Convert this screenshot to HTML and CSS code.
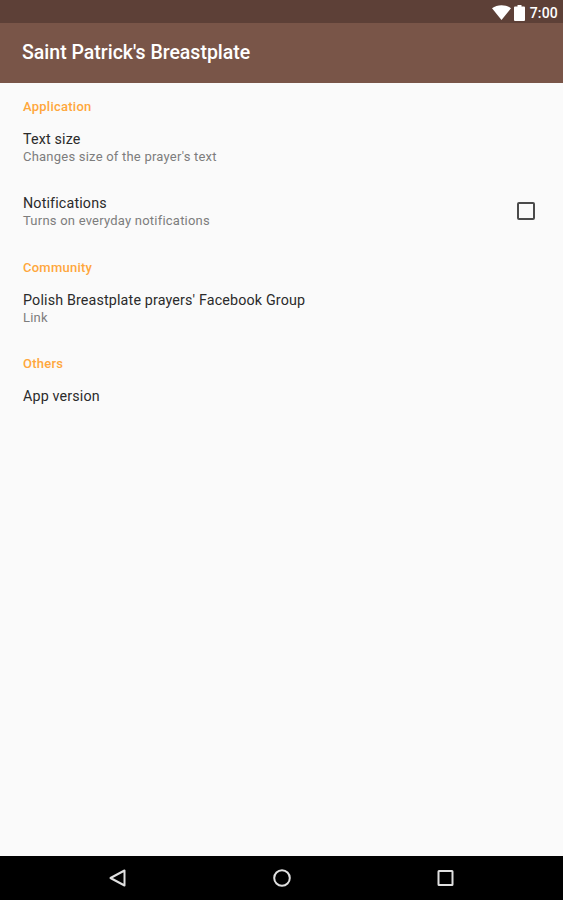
FILE: index.html
```html
<!DOCTYPE html>
<html lang="en">
  <head>
    <meta charset="UTF-8" />
    <meta name="viewport" content="width=device-width, initial-scale=1.0" />
    <title>Saint Patrick's Breastplate</title>
    <link rel="stylesheet" href="styles.css">
  </head>
  <body>
    <div class="statusbar">
      <svg width="19" height="15" viewBox="0 0 19 15">
        <path d="M0 3.2C5.3-.8 13.7-.8 19 3.2L9.5 15z" />
      </svg>
      <svg width="11" height="16" viewBox="0 0 11 16">
        <path d="M3.500 0h4v1.500h2.500q1 0 1 1V15q0 1-1 1H1q-1 0-1-1V2.500q0-1 1-1h2.500z" />
      </svg>
      <span class="clock">7:00</span>
    </div>

    <header class="toolbar">
      <h1>Saint Patrick's Breastplate</h1>
    </header>

    <main class="settings">
      <h2>Application</h2>
      <div class="item">
        <div>
          <div class="title">Text size</div>
          <div class="summary">Changes size of the prayer's text</div>
        </div>
      </div>
      <div class="item">
        <div>
          <div class="title">Notifications</div>
          <div class="summary">Turns on everyday notifications</div>
        </div>
        <span class="checkbox"></span>
      </div>

      <h2>Community</h2>
      <div class="item">
        <div>
          <div class="title">Polish Breastplate prayers' Facebook Group</div>
          <div class="summary">Link</div>
        </div>
      </div>

      <h2>Others</h2>
      <div class="item">
        <div class="title">App version</div>
      </div>
    </main>

    <nav class="navbar">
      <svg width="20" height="20" viewBox="0 0 20 20">
        <path d="M16.500 2.500v15L2.500 10z" />
      </svg>
      <svg width="20" height="20" viewBox="0 0 20 20">
        <circle cx="10" cy="10" r="7.8" />
      </svg>
      <svg width="20" height="20" viewBox="0 0 20 20">
        <rect x="2.5" y="3" width="14" height="14" rx="0.5" />
      </svg>
    </nav>
  </body>
</html>
```

FILE: styles.css
```css
body {
  margin: 0;
  height: 100vh;
  display: flex;
  flex-direction: column;
  background-color: #fafafa;
  font-family: Roboto, sans-serif;
}

/* status bar */
.statusbar {
  display: flex;
  justify-content: flex-end;
  align-items: center;
  gap: 3px;
  height: 23px;
  padding: 2px 5px 0 0;
  box-sizing: border-box;
  background-color: #5d4037;
  color: white;
}
.statusbar svg {
  fill: white;
}
.clock {
  margin-left: 2px;
  font-size: 14px;
  font-weight: 500;
  line-height: 16px;
  letter-spacing: 0.2px;
}

.toolbar {
  display: flex;
  align-items: center;
  height: 60px;
  padding: 0 0 1px 22px;
  box-sizing: border-box;
  background-color: #795548;
}
h1 {
  margin: 0;
  color: white;
  font-size: 19.5px;
  font-weight: 500;
}

/* preference list */
.settings {
  flex: 1;
  padding: 0 28px 0 23px;
}
h2 {
  height: 32.3px;
  margin: 0;
  padding-top: 15px;
  box-sizing: border-box;
  color: #ffa73c;
  font-size: 13px;
  font-weight: 500;
  line-height: 17px;
  letter-spacing: 0.25px;
}
.item {
  display: flex;
  justify-content: space-between;
  height: 64.3px;
  padding-top: 15.7px;
  box-sizing: border-box;
}
.title {
  color: #2b2b2b;
  font-size: 14.3px;
  line-height: 17px;
  letter-spacing: 0.15px;
}
.summary {
  color: #7d7d7d;
  font-size: 13px;
  line-height: 18px;
  letter-spacing: 0.22px;
}
.checkbox {
  width: 18px;
  height: 18px;
  margin-top: 6.5px;
  box-sizing: border-box;
  border: 2px solid #4a4a4a;
  border-radius: 2px;
}

/* navigation keys */
.navbar {
  display: flex;
  justify-content: center;
  align-items: center;
  gap: 144px;
  height: 44px;
  background-color: black;
}
.navbar svg {
  fill: none;
  stroke: #e0e0e0;
  stroke-width: 2;
  stroke-linejoin: round;
}
```
